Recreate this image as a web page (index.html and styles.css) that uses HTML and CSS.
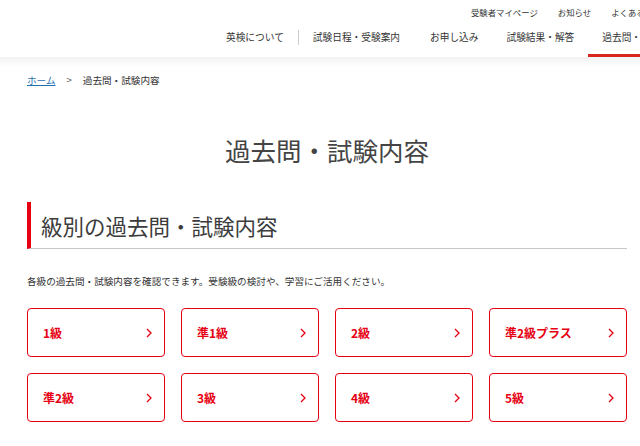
FILE: index.html
```html
<!DOCTYPE html>
<html lang="ja">
<head>
<meta charset="utf-8">
<title>過去問・試験内容</title>
<link rel="stylesheet" href="styles.css">
</head>
<body>
<header class="site-header">
  <div class="util-links">
    <a href="#">受験者マイページ</a>
    <a href="#">お知らせ</a>
    <a href="#">よくある質問</a>
  </div>
  <nav class="global-nav">
    <a class="nav-item" href="#">英検について</a>
    <span class="nav-sep"></span>
    <a class="nav-item wide" href="#">試験日程・受験案内</a>
    <a class="nav-item" href="#">お申し込み</a>
    <a class="nav-item" href="#">試験結果・解答</a>
    <a class="nav-item active" href="#">過去問・試験内容</a>
  </nav>
</header>
<div class="header-shadow"></div>
<main class="content">
  <div class="breadcrumb">
    <a href="#">ホーム</a>
    <span class="bc-sep">&gt;</span>
    <span>過去問・試験内容</span>
  </div>
  <h1 class="page-title">過去問・試験内容</h1>
  <h2 class="section-title">級別の過去問・試験内容</h2>
  <p class="lead">各級の過去問・試験内容を確認できます。受験級の検討や、学習にご活用ください。</p>
  <div class="grade-grid">
    <a class="grade-card" href="#"><span>1級</span><svg class="chev" viewBox="0 0 6 10" width="6" height="10"><polyline points="1,1 5,5 1,9"/></svg></a>
    <a class="grade-card" href="#"><span>準1級</span><svg class="chev" viewBox="0 0 6 10" width="6" height="10"><polyline points="1,1 5,5 1,9"/></svg></a>
    <a class="grade-card" href="#"><span>2級</span><svg class="chev" viewBox="0 0 6 10" width="6" height="10"><polyline points="1,1 5,5 1,9"/></svg></a>
    <a class="grade-card" href="#"><span>準2級プラス</span><svg class="chev" viewBox="0 0 6 10" width="6" height="10"><polyline points="1,1 5,5 1,9"/></svg></a>
    <a class="grade-card" href="#"><span>準2級</span><svg class="chev" viewBox="0 0 6 10" width="6" height="10"><polyline points="1,1 5,5 1,9"/></svg></a>
    <a class="grade-card" href="#"><span>3級</span><svg class="chev" viewBox="0 0 6 10" width="6" height="10"><polyline points="1,1 5,5 1,9"/></svg></a>
    <a class="grade-card" href="#"><span>4級</span><svg class="chev" viewBox="0 0 6 10" width="6" height="10"><polyline points="1,1 5,5 1,9"/></svg></a>
    <a class="grade-card" href="#"><span>5級</span><svg class="chev" viewBox="0 0 6 10" width="6" height="10"><polyline points="1,1 5,5 1,9"/></svg></a>
  </div>
</main>
</body>
</html>
```
FILE: styles.css
```css
html, body {
  margin: 0;
  padding: 0;
  background: #fff;
  overflow: hidden;
}
body {
  font-family: "Noto Sans CJK JP", "Noto Sans", sans-serif;
  color: #333;
  width: 640px;
}
a {
  color: inherit;
  text-decoration: none;
}
.site-header {
  height: 57px;
  overflow: hidden;
  white-space: nowrap;
}
.util-links {
  height: 24px;
  display: flex;
  align-items: center;
  gap: 20px;
  padding-left: 471px;
  font-size: 8.4px;
  color: #333;
}
.util-links a {
  flex: none;
}
.global-nav {
  height: 33px;
  display: flex;
  align-items: stretch;
  padding-left: 212px;
  font-size: 9.7px;
  color: #333;
}
.nav-item {
  flex: none;
  box-sizing: border-box;
  padding: 6px 14px 0;
  line-height: 14px;
  border-bottom: 3px solid transparent;
}
.nav-item.wide {
  padding-right: 16px;
}
.nav-item.active {
  border-bottom-color: #d9261c;
}
.nav-sep {
  flex: none;
  width: 1px;
  height: 15px;
  margin-top: 6px;
  background: #ccc;
}
.header-shadow {
  height: 10px;
  background: linear-gradient(#f2f2f2, #fff);
}
.content {
  padding: 0 13px 0 27px;
}
.breadcrumb {
  display: flex;
  align-items: center;
  height: 20px;
  margin-top: 3px;
  font-size: 9.6px;
  color: #333;
}
.breadcrumb a {
  color: #1f6fb2;
  text-decoration: underline;
}
.bc-sep {
  margin: 0 11px;
  color: #555;
}
.page-title {
  margin: 43px 0 0;
  text-align: center;
  font-size: 25.5px;
  font-weight: 400;
  line-height: 34px;
  color: #444;
}
.section-title {
  margin: 35px 0 0;
  height: 47px;
  box-sizing: border-box;
  border-left: 4px solid #e60012;
  border-bottom: 1px solid #c8c8c8;
  padding-left: 10px;
  display: flex;
  align-items: center;
  font-size: 21.5px;
  font-weight: 400;
  color: #3c3c3c;
}
.lead {
  margin: 25px 0 0;
  font-size: 9.6px;
  line-height: 14px;
  color: #333;
}
.grade-grid {
  margin-top: 20px;
  display: grid;
  grid-template-columns: repeat(4, 138px);
  gap: 16px;
}
.grade-card {
  height: 49px;
  box-sizing: border-box;
  border: 1px solid #e60012;
  border-radius: 4px;
  display: flex;
  align-items: center;
  justify-content: space-between;
  padding: 0 12px 0 15px;
  color: #e60012;
  font-weight: 700;
  font-size: 12px;
}
.chev {
  fill: none;
  stroke: #e60012;
  stroke-width: 1.3;
}
```
